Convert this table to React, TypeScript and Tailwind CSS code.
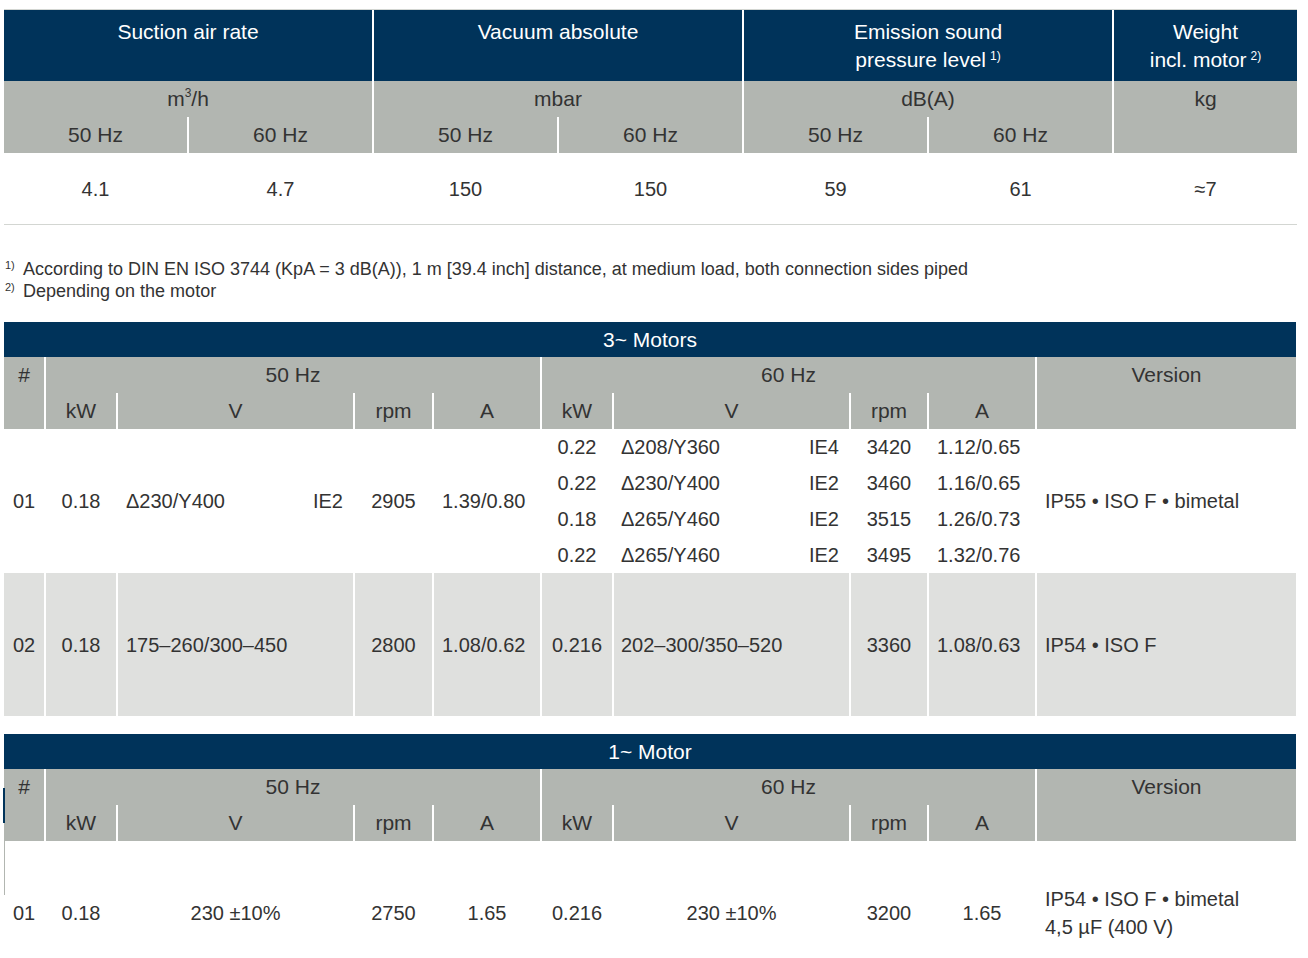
const head = 'bg-[#00335a] text-white text-[21px]'
const gray = 'bg-[#b2b6b1] text-[21px]'

function Sup({ children }: { children: React.ReactNode }) {
  return <span className="relative -top-[7px] ml-[4px] text-[12px] leading-none">{children}</span>
}

function SpecTable() {
  const hz = ['50 Hz', '60 Hz', '50 Hz', '60 Hz', '50 Hz', '60 Hz']
  const values = ['4.1', '4.7', '150', '150', '59', '61', '≈7']
  return (
    <div className="ml-[4px] w-[1293px] mt-[9px] border-t border-b border-[#d3d6d2] grid grid-cols-7 gap-x-[2px] text-[20px]">
      <div className={`${head} col-span-2 h-[71px] pt-[8px] text-center leading-[28px]`}>Suction air rate</div>
      <div className={`${head} col-span-2 h-[71px] pt-[8px] text-center leading-[28px]`}>Vacuum absolute</div>
      <div className={`${head} col-span-2 h-[71px] pt-[8px] text-center leading-[28px]`}>
        Emission sound
        <br />
        pressure level<Sup>1)</Sup>
      </div>
      <div className={`${head} h-[71px] pt-[8px] text-center leading-[28px]`}>
        Weight
        <br />
        incl. motor<Sup>2)</Sup>
      </div>

      <div className={`${gray} col-span-2 h-[36px] flex items-center justify-center`}>
        m<sup className="text-[12px]">3</sup>/h
      </div>
      <div className={`${gray} col-span-2 h-[36px] flex items-center justify-center`}>mbar</div>
      <div className={`${gray} col-span-2 h-[36px] flex items-center justify-center`}>dB(A)</div>
      <div className={`${gray} row-span-2 h-[72px] flex justify-center pt-[4px] leading-[28px]`}>kg</div>
      {hz.map((h, i) => (
        <div key={i} className={`${gray} h-[36px] flex items-center justify-center`}>{h}</div>
      ))}

      {values.map((v, i) => (
        <div key={i} className="h-[71px] flex items-center justify-center">{v}</div>
      ))}
    </div>
  )
}

function MotorHead({ title }: { title: string }) {
  const sub = ['kW', 'V', 'rpm', 'A', 'kW', 'V', 'rpm', 'A']
  return (
    <>
      <div className={`${head} col-span-10 h-[35px] flex items-center justify-center`}>{title}</div>
      <div className={`${gray} row-span-2 flex justify-center pt-[4px] leading-[28px]`}>#</div>
      <div className={`${gray} col-span-4 h-[36px] flex items-center justify-center`}>50 Hz</div>
      <div className={`${gray} col-span-4 h-[36px] flex items-center justify-center`}>60 Hz</div>
      <div className={`${gray} row-span-2 flex justify-center pt-[4px] leading-[28px]`}>Version</div>
      {sub.map((s, i) => (
        <div key={i} className={`${gray} h-[36px] flex items-center justify-center`}>{s}</div>
      ))}
    </>
  )
}

const cols = 'grid grid-cols-[40px_70px_235px_77px_106px_70px_235px_76px_106px_259px] gap-x-[2px]'

const rows60 = [
  ['0.22', 'Δ208/Y360', 'IE4', '3420', '1.12/0.65'],
  ['0.22', 'Δ230/Y400', 'IE2', '3460', '1.16/0.65'],
  ['0.18', 'Δ265/Y460', 'IE2', '3515', '1.26/0.73'],
  ['0.22', 'Δ265/Y460', 'IE2', '3495', '1.32/0.76'],
]

function ThreePhase() {
  const b = 'bg-[#dfe0de] h-[143px] flex items-center'
  return (
    <div className={`ml-[4px] w-[1292px] mt-[20px] ${cols} text-[20px]`}>
      <MotorHead title="3~ Motors" />

      <div className="row-span-4 flex items-center justify-center">01</div>
      <div className="row-span-4 flex items-center justify-center">0.18</div>
      <div className="row-span-4 flex items-center justify-between pl-[8px] pr-[10px]">
        <span>Δ230/Y400</span>
        <span>IE2</span>
      </div>
      <div className="row-span-4 flex items-center justify-center">2905</div>
      <div className="row-span-4 flex items-center pl-[8px]">1.39/0.80</div>
      {rows60.map((r, i) => (
        <Row60 key={i} r={r} first={i === 0} />
      ))}

      <div className={`${b} justify-center`}>02</div>
      <div className={`${b} justify-center`}>0.18</div>
      <div className={`${b} pl-[8px]`}>175–260/300–450</div>
      <div className={`${b} justify-center`}>2800</div>
      <div className={`${b} pl-[8px]`}>1.08/0.62</div>
      <div className={`${b} justify-center`}>0.216</div>
      <div className={`${b} pl-[7px]`}>202–300/350–520</div>
      <div className={`${b} justify-center`}>3360</div>
      <div className={`${b} pl-[8px]`}>1.08/0.63</div>
      <div className={`${b} pl-[8px]`}>IP54 • ISO F</div>
    </div>
  )
}

function Row60({ r, first }: { r: string[]; first: boolean }) {
  return (
    <>
      <div className="h-[36px] flex items-center justify-center">{r[0]}</div>
      <div className="h-[36px] flex items-center justify-between pl-[7px] pr-[10px]">
        <span>{r[1]}</span>
        <span>{r[2]}</span>
      </div>
      <div className="h-[36px] flex items-center justify-center">{r[3]}</div>
      <div className="h-[36px] flex items-center pl-[8px]">{r[4]}</div>
      {first && <div className="row-span-4 flex items-center pl-[8px]">IP55 • ISO F • bimetal</div>}
    </>
  )
}

function SinglePhase() {
  const c = 'h-[144px] flex items-center justify-center'
  return (
    <div className="relative mt-[18px]">
      <div className={`ml-[4px] w-[1292px] ${cols} text-[20px]`}>
        <MotorHead title="1~ Motor" />
        <div className={c}>01</div>
        <div className={c}>0.18</div>
        <div className={c}>230 ±10%</div>
        <div className={c}>2750</div>
        <div className={c}>1.65</div>
        <div className={c}>0.216</div>
        <div className={c}>230 ±10%</div>
        <div className={c}>3200</div>
        <div className={c}>1.65</div>
        <div className="h-[144px] flex flex-col justify-center pl-[8px] leading-[28px]">
          <span>IP54 • ISO F • bimetal</span>
          <span>4,5 µF (400 V)</span>
        </div>
      </div>
      {/* stray edge marks at the left border */}
      <div className="absolute left-[3px] top-[54px] h-[35px] w-[2px] bg-[#00335a]" />
      <div className="absolute left-[4px] top-[107px] h-[54px] w-[1px] bg-[#b2b6b1]" />
    </div>
  )
}

export default function App() {
  return (
    <div className="min-h-screen bg-white text-[#333] font-['Liberation_Sans',Arial,sans-serif] overflow-hidden">
      <SpecTable />

      <div className="mt-[33px] ml-[5px] text-[18px] leading-[22px]">
        <div className="flex">
          <span className="w-[18px] text-[11px] leading-[14px]">1)</span>
          <span>According to DIN EN ISO 3744 (KpA = 3 dB(A)), 1 m [39.4 inch] distance, at medium load, both connection sides piped</span>
        </div>
        <div className="flex">
          <span className="w-[18px] text-[11px] leading-[14px]">2)</span>
          <span>Depending on the motor</span>
        </div>
      </div>

      <ThreePhase />
      <SinglePhase />
    </div>
  )
}
